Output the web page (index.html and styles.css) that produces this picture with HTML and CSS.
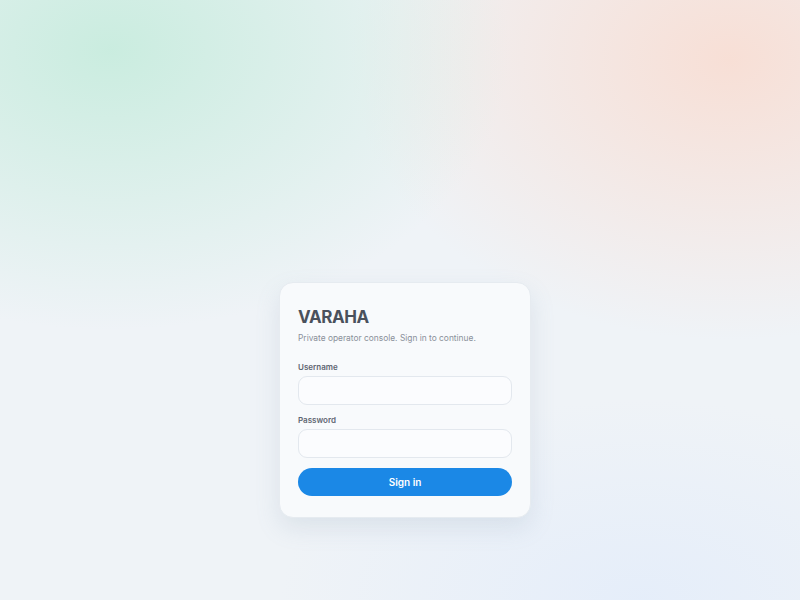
FILE: index.html
```html
<!DOCTYPE html>
<html lang="en">
<head>
<meta charset="utf-8">
<title>VARAHA</title>
<link rel="stylesheet" href="styles.css">
</head>
<body>
<main class="page">
  <form class="card">
    <h1 class="brand">VARAHA</h1>
    <p class="sub">Private operator console. Sign in to continue.</p>
    <label class="field">
      <span class="label">Username</span>
      <input class="input" type="text">
    </label>
    <label class="field">
      <span class="label">Password</span>
      <input class="input" type="password">
    </label>
    <button class="btn" type="button">Sign in</button>
  </form>
</main>
</body>
</html>
```
FILE: styles.css
```css
* { box-sizing: border-box; }
html, body { margin: 0; height: 100%; }
body {
  font-family: Inter, "Noto Sans", sans-serif;
  background:
    radial-gradient(ellipse 400px 280px at 110px 50px, rgba(200, 236, 222, 0.95), rgba(200, 236, 222, 0) 100%),
    radial-gradient(ellipse 380px 280px at 730px 60px, rgba(248, 222, 212, 0.95), rgba(248, 222, 212, 0) 100%),
    radial-gradient(ellipse 360px 200px at 640px 600px, rgba(228, 237, 250, 0.9), rgba(228, 237, 250, 0) 100%),
    #eff3f7;
}
.page {
  height: 100%;
  display: flex;
  justify-content: center;
  padding-top: 282px;
}
.card {
  width: 252px;
  height: 236px;
  margin-left: 10px;
  background: #f8fafc;
  border: 1px solid #e6ebf0;
  border-radius: 14px;
  box-shadow: 0 10px 24px rgba(120, 140, 170, 0.16);
  padding: 22px 18px 0 18px;
  display: flex;
  flex-direction: column;
}
.brand {
  margin: 0;
  font-size: 17px;
  font-weight: 700;
  color: #4a515c;
  letter-spacing: -0.4px;
  line-height: 24px;
}
.sub {
  margin: 2px 0 0;
  font-size: 8.4px;
  color: #8a909a;
  line-height: 14px;
}
.field {
  display: flex;
  flex-direction: column;
  margin-top: 16px;
}
.field + .field { margin-top: 9px; }
.label {
  font-size: 8px;
  font-weight: 600;
  color: #5f6672;
  line-height: 12px;
  margin-bottom: 3px;
}
.input {
  height: 29px;
  width: 100%;
  border: 1px solid #e3e8ee;
  border-radius: 9px;
  background: #fbfcfe;
  outline: none;
}
.btn {
  margin-top: 10px;
  height: 28px;
  border: none;
  border-radius: 14px;
  background: #1b88e6;
  color: #fff;
  font-family: inherit;
  font-size: 10px;
  font-weight: 600;
}
```
